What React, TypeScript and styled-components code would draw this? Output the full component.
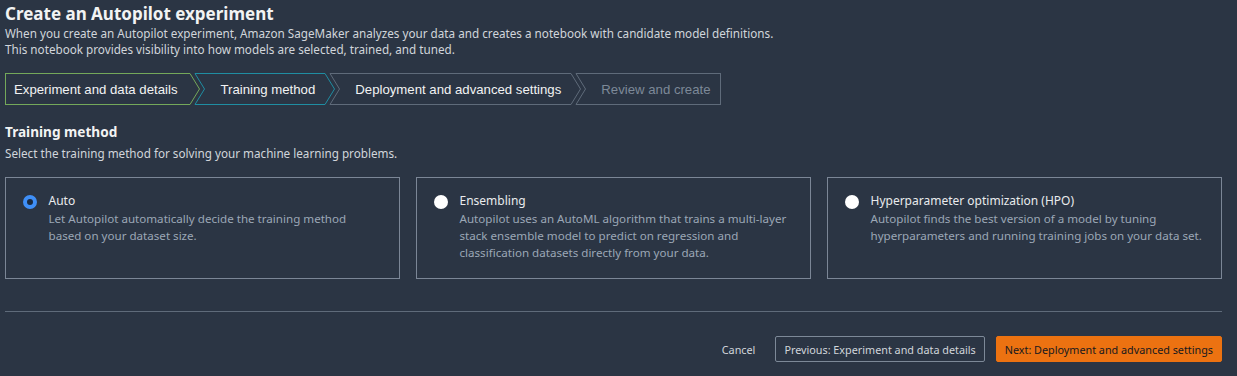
import React from "react";
import styled, { createGlobalStyle } from "styled-components";

const GlobalStyle = createGlobalStyle`
  html, body { margin: 0; padding: 0; background: #2b3544; }
  body { font-family: "Noto Sans", "Open Sans", sans-serif; color: #e9ebed; }
  * { box-sizing: border-box; }
`;

const Page = styled.div`
  padding: 3px 15px 0 5px;
  background: #2b3544;
  min-height: 376px;
`;

const Title = styled.h1`
  margin: 0;
  font-size: 17px;
  line-height: 22px;
  font-weight: 700;
  color: #f2f3f3;
`;

const Desc = styled.p`
  margin: 0;
  font-size: 11.7px;
  line-height: 16px;
  color: #d1d5db;
`;

const Stepper = styled.div`
  display: flex;
  margin-top: 16px;
  height: 32px;
`;

const Step = styled.div<{ $first?: boolean }>`
  display: flex;
  height: 32px;
  margin-left: ${(p) => (p.$first ? "0" : "-5px")};
`;

const StepBody = styled.div<{ $color: string; $first?: boolean; $last?: boolean; $muted?: boolean }>`
  display: flex;
  align-items: center;
  height: 32px;
  border-top: 1px solid ${(p) => p.$color};
  border-bottom: 1px solid ${(p) => p.$color};
  border-left: ${(p) => (p.$first ? `1px solid ${p.$color}` : "none")};
  border-right: ${(p) => (p.$last ? `1px solid ${p.$color}` : "none")};
  padding: 0 ${(p) => (p.$last ? "9px" : p.$first ? "13px" : "10px")} 0 ${(p) => (p.$first ? "8px" : "15px")};
  font-family: "Liberation Sans", Arial, sans-serif;
  font-size: 13.2px;
  color: ${(p) => (p.$muted ? "#7d8998" : "#f2f3f3")};
  white-space: nowrap;
`;

const Edge = styled.svg`
  display: block;
  flex: none;
  width: 10px;
  height: 32px;
  overflow: visible;
`;

const Notch = ({ color }: { color: string }) => (
  <Edge viewBox="0 0 10 32">
    <path d="M0 0.5 H10 M0 0.5 L9.5 16 L0 31.5 H10" fill="none" stroke={color} strokeWidth="1" />
  </Edge>
);

const Tip = ({ color }: { color: string }) => (
  <Edge viewBox="0 0 10 32">
    <path d="M0 0.5 L9.5 16 L0 31.5" fill="none" stroke={color} strokeWidth="1" />
  </Edge>
);

const SectionTitle = styled.h2`
  margin: 18px 0 0;
  font-size: 13.6px;
  line-height: 18px;
  font-weight: 700;
  color: #f2f3f3;
`;

const SectionDesc = styled.p`
  margin: 4px 0 0;
  font-size: 11.7px;
  line-height: 16px;
  color: #d1d5db;
`;

const Cards = styled.div`
  display: grid;
  grid-template-columns: repeat(3, 1fr);
  gap: 16px;
  margin-top: 16px;
`;

const Card = styled.div`
  height: 102px;
  border: 1px solid #7b8696;
  padding: 14px 16px;
  display: flex;
  gap: 12px;
  align-items: flex-start;
`;

const Radio = styled.span<{ $checked?: boolean }>`
  flex: none;
  width: 14px;
  height: 14px;
  border-radius: 50%;
  margin-top: 3px;
  margin-left: 0.5px;
  background: ${(p) => (p.$checked ? "#1b2a3f" : "#ffffff")};
  border: ${(p) => (p.$checked ? "4px solid #3f8ff7" : "none")};
`;

const CardText = styled.div`
  display: flex;
  flex-direction: column;
`;

const CardLabel = styled.div`
  font-size: 12px;
  line-height: 18px;
  color: #e9ebed;
`;

const CardDesc = styled.div`
  max-width: 332px;
  font-size: 11.6px;
  line-height: 17px;
  color: #9ba7b6;
`;

const Divider = styled.hr`
  margin: 32px 0 0;
  border: none;
  border-top: 1px solid #5f6b7a;
`;

const Footer = styled.div`
  display: flex;
  justify-content: flex-end;
  align-items: center;
  margin-top: 24px;
  gap: 11px;
`;

const Button = styled.button<{ $variant: "link" | "normal" | "primary" }>`
  height: 26px;
  padding: 0 8px;
  font-family: "Noto Sans", "Open Sans", sans-serif;
  font-size: 10.8px;
  border-radius: 2px;
  cursor: pointer;
  white-space: nowrap;
  background: ${(p) => (p.$variant === "primary" ? "#ec7211" : "transparent")};
  color: ${(p) => (p.$variant === "primary" ? "#16191f" : "#d1d5db")};
  border: ${(p) =>
    p.$variant === "normal" ? "1px solid #7d8998" : p.$variant === "primary" ? "1px solid #ec7211" : "none"};
  margin-right: ${(p) => (p.$variant === "link" ? "1px" : "0")};
`;

const steps = [
  { label: "Experiment and data details", color: "#74a85a" },
  { label: "Training method", color: "#1f8da2" },
  { label: "Deployment and advanced settings", color: "#5f6b7a" },
  { label: "Review and create", color: "#5f6b7a", muted: true },
];

const options = [
  {
    label: "Auto",
    desc: "Let Autopilot automatically decide the training method based on your dataset size.",
    checked: true,
  },
  {
    label: "Ensembling",
    desc: "Autopilot uses an AutoML algorithm that trains a multi-layer stack ensemble model to predict on regression and classification datasets directly from your data.",
  },
  {
    label: "Hyperparameter optimization (HPO)",
    desc: "Autopilot finds the best version of a model by tuning hyperparameters and running training jobs on your data set.",
  },
];

export default function App() {
  return (
    <>
      <GlobalStyle />
      <Page>
        <Title>Create an Autopilot experiment</Title>
        <Desc>
          When you create an Autopilot experiment, Amazon SageMaker analyzes your data and creates a notebook with
          candidate model definitions.
          <br />
          This notebook provides visibility into how models are selected, trained, and tuned.
        </Desc>
        <Stepper>
          {steps.map((s, i) => {
            const first = i === 0;
            const last = i === steps.length - 1;
            return (
              <Step key={s.label} $first={first}>
                {!first && <Notch color={s.color} />}
                <StepBody $color={s.color} $first={first} $last={last} $muted={s.muted}>
                  {s.label}
                </StepBody>
                {!last && <Tip color={s.color} />}
              </Step>
            );
          })}
        </Stepper>
        <SectionTitle>Training method</SectionTitle>
        <SectionDesc>Select the training method for solving your machine learning problems.</SectionDesc>
        <Cards>
          {options.map((o) => (
            <Card key={o.label}>
              <Radio $checked={o.checked} />
              <CardText>
                <CardLabel>{o.label}</CardLabel>
                <CardDesc>{o.desc}</CardDesc>
              </CardText>
            </Card>
          ))}
        </Cards>
        <Divider />
        <Footer>
          <Button $variant="link">Cancel</Button>
          <Button $variant="normal">Previous: Experiment and data details</Button>
          <Button $variant="primary">Next: Deployment and advanced settings</Button>
        </Footer>
      </Page>
    </>
  );
}
